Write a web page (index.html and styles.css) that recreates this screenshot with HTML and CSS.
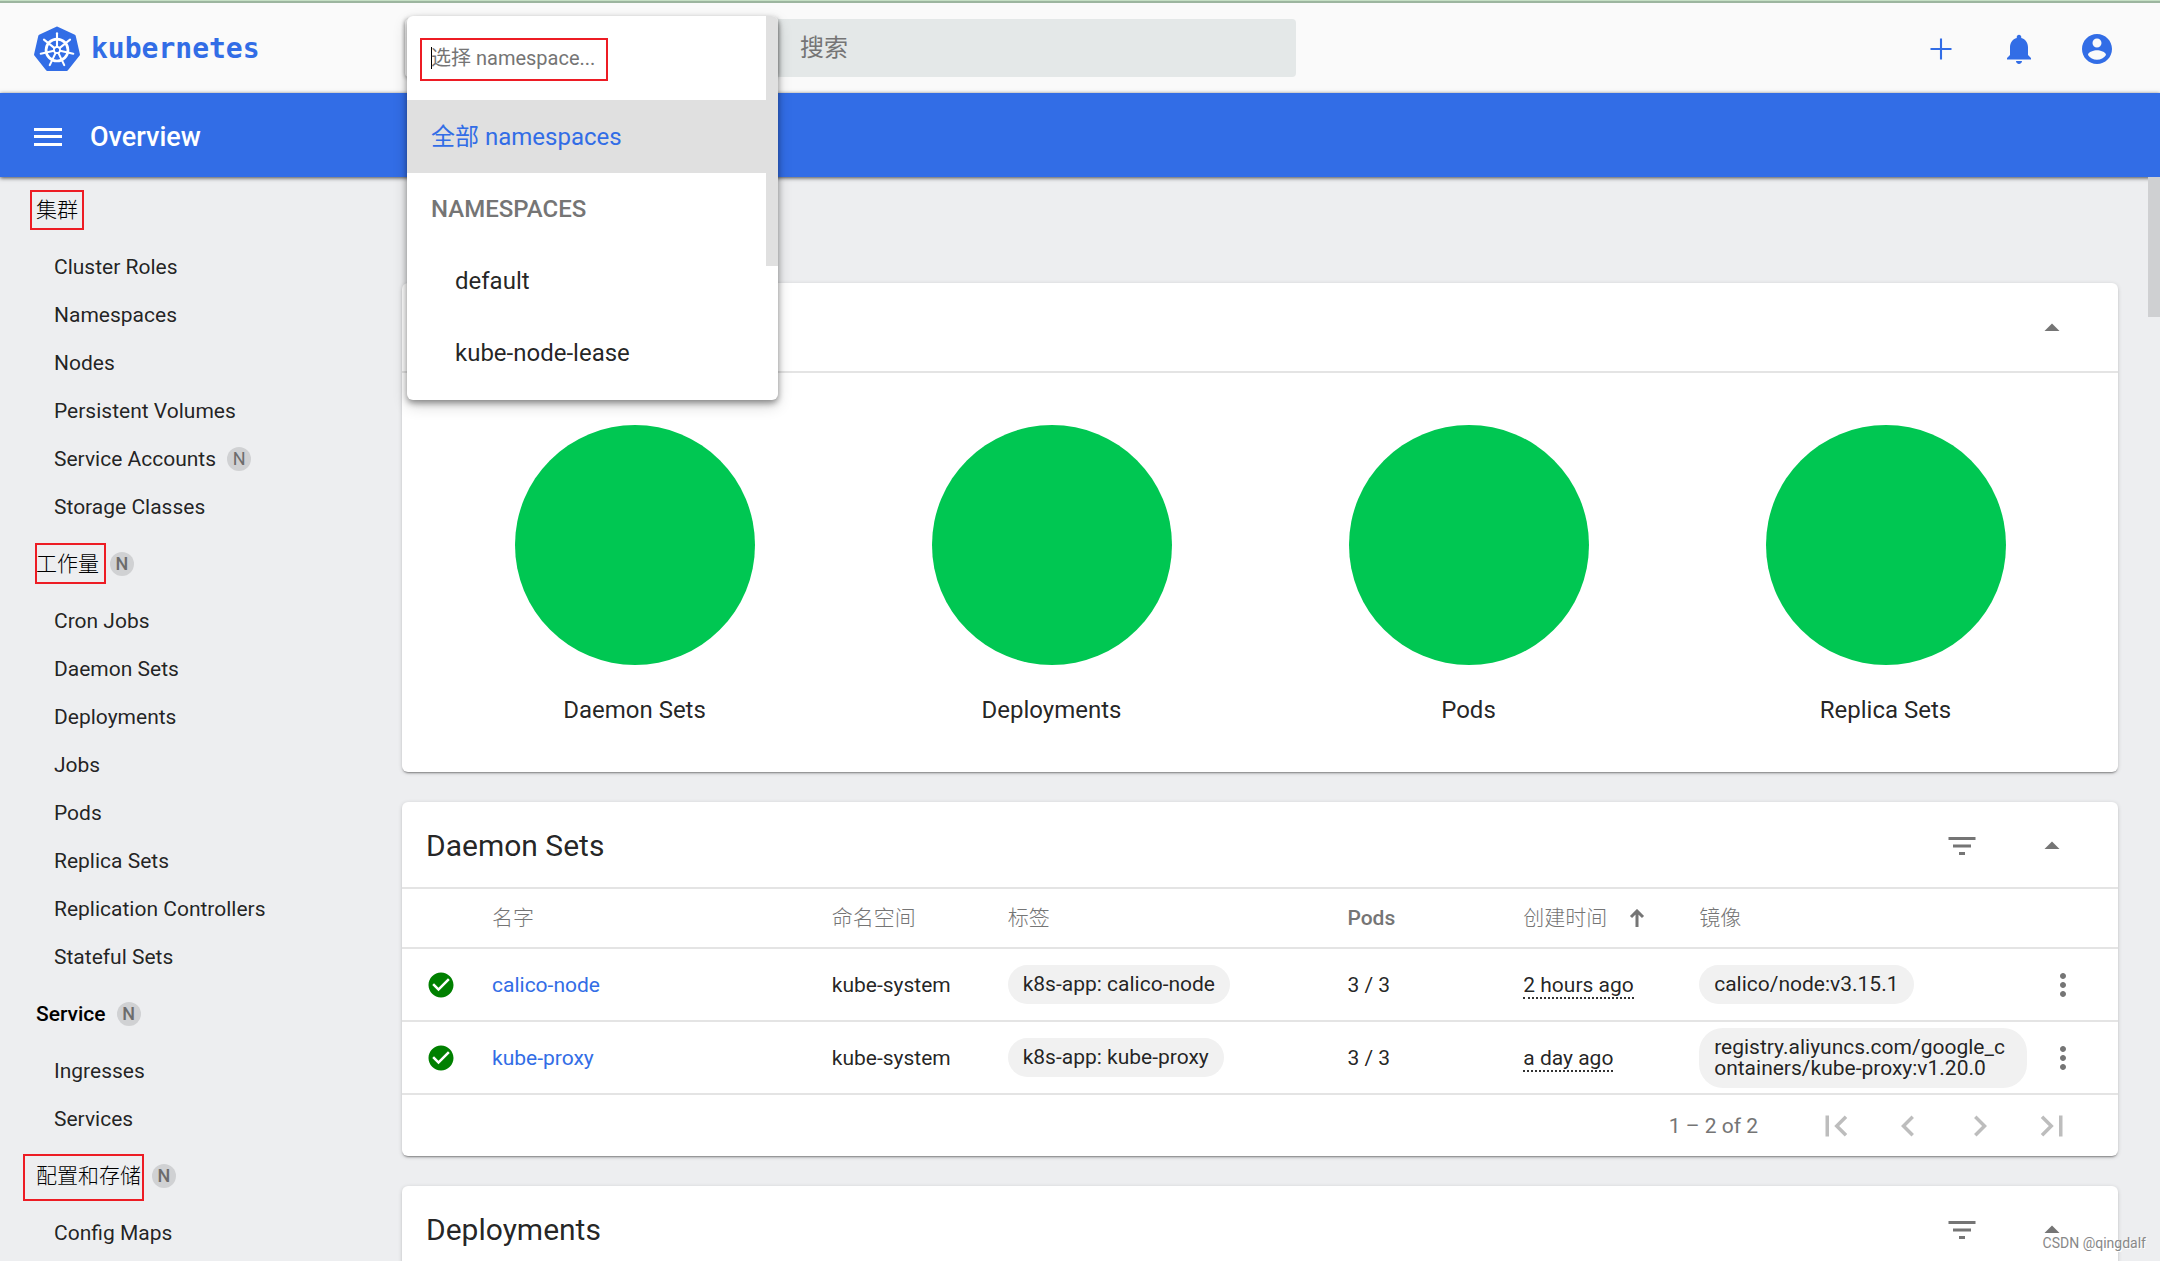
FILE: index.html
```html
<!DOCTYPE html>
<html lang="zh-CN">
<head>
<meta charset="utf-8">
<meta name="viewport" content="width=device-width, initial-scale=1">
<title>Overview - Kubernetes Dashboard</title>
<link rel="stylesheet" href="styles.css">
</head>
<body>
<svg class="defs" aria-hidden="true">
  <symbol id="i-up" viewBox="0 0 24 24"><path d="M7 14l5-5 5 5z"/></symbol>
  <symbol id="i-filter" viewBox="0 0 24 24"><path d="M10 18h4v-2h-4v2zM3 6v2h18V6H3zm3 7h12v-2H6v2z"/></symbol>
  <symbol id="i-more" viewBox="0 0 24 24"><path d="M12 8c1.1 0 2-.9 2-2s-.9-2-2-2-2 .9-2 2 .9 2 2 2zm0 2c-1.1 0-2 .9-2 2s.9 2 2 2 2-.9 2-2-.9-2-2-2zm0 6c-1.1 0-2 .9-2 2s.9 2 2 2 2-.9 2-2-.9-2-2-2z"/></symbol>
  <symbol id="i-check" viewBox="0 0 24 24"><path d="M12 2C6.480 2 2 6.480 2 12s4.480 10 10 10 10-4.480 10-10S17.520 2 12 2zm-2 15l-5-5 1.410-1.410L10 14.170l7.590-7.590L19 8l-9 9z"/></symbol>
</svg>

<header class="topbar">
  <a class="brand" href="#" aria-label="kubernetes">
    <svg class="brand-mark" viewBox="0 0 46 46" aria-hidden="true">
      <path d="M23 3L39.500 10.800 43.500 28.300 32.300 42.500H13.700L2.500 28.300 6.500 10.800Z" fill="#326de6" stroke="#326de6" stroke-width="3" stroke-linejoin="round"/>
      <g fill="none" stroke="#fff" transform="translate(23 24)">
        <circle r="10.500" stroke-width="2.600"/>
        <g stroke-width="2" stroke-linecap="round">
          <path d="M0-3V-16"/>
          <path d="M0-3V-16" transform="rotate(51.430)"/>
          <path d="M0-3V-16" transform="rotate(102.860)"/>
          <path d="M0-3V-16" transform="rotate(154.290)"/>
          <path d="M0-3V-16" transform="rotate(205.710)"/>
          <path d="M0-3V-16" transform="rotate(257.140)"/>
          <path d="M0-3V-16" transform="rotate(308.570)"/>
        </g>
        <circle r="3" stroke-width="1.600"/>
      </g>
    </svg>
    <span>kubernetes</span>
  </a>
  <div class="ns-select">
    <button class="ns-trigger" type="button" aria-label="namespace" aria-expanded="true"></button>
    <div class="ns-panel">
      <div class="ns-search"><input type="text" placeholder="选择 namespace..." aria-label="选择 namespace"></div>
      <button class="ns-option selected" type="button">全部 namespaces</button>
      <div class="ns-group">NAMESPACES</div>
      <button class="ns-option nested" type="button">default</button>
      <button class="ns-option nested" type="button">kube-node-lease</button>
    </div>
  </div>
  <input class="search" type="search" placeholder="搜索" aria-label="搜索">
  <div class="top-actions">
    <button type="button" aria-label="Create"><svg class="icon" viewBox="0 0 24 24"><path d="M19 12.700h-6.300V19h-1.400v-6.300H5v-1.400h6.300V5h1.400v6.300H19z"/></svg></button>
    <button type="button" aria-label="Notifications"><svg class="icon" viewBox="0 0 24 24"><path d="M12 22c1.100 0 2-.9 2-2h-4c0 1.100.9 2 2 2zm6-6v-5c0-3.070-1.630-5.640-4.500-6.320V4c0-.83-.67-1.500-1.500-1.500s-1.500.67-1.500 1.500v.68C7.640 5.360 6 7.920 6 11v5l-2 2v1h16v-1l-2-2z"/></svg></button>
    <button type="button" aria-label="User"><svg class="icon" viewBox="0 0 24 24"><path d="M12 2C6.480 2 2 6.480 2 12s4.480 10 10 10 10-4.480 10-10S17.520 2 12 2zm0 3c1.660 0 3 1.340 3 3s-1.340 3-3 3-3-1.340-3-3 1.340-3 3-3zm0 14.200c-2.500 0-4.710-1.280-6-3.220.03-1.990 4-3.080 6-3.080 1.990 0 5.970 1.090 6 3.080-1.290 1.940-3.500 3.220-6 3.220z"/></svg></button>
  </div>
</header>

<div class="titlebar">
  <button type="button" aria-label="Menu"><svg class="icon" viewBox="0 0 36 36"><path d="M4 9h28v3H4zM4 16h28v3H4zM4 24h28v3H4z"/></svg></button>
  <h1>Overview</h1>
</div>

<div class="body">
  <nav class="sidebar">
    <a class="group" href="#"><span class="mark mark-a">集群</span></a>
    <a href="#">Cluster Roles</a>
    <a href="#">Namespaces</a>
    <a href="#">Nodes</a>
    <a href="#">Persistent Volumes</a>
    <a href="#">Service Accounts<span class="badge">N</span></a>
    <a href="#">Storage Classes</a>
    <a class="group" href="#"><span class="mark mark-b">工作量</span><span class="badge">N</span></a>
    <a href="#">Cron Jobs</a>
    <a href="#">Daemon Sets</a>
    <a href="#">Deployments</a>
    <a href="#">Jobs</a>
    <a href="#">Pods</a>
    <a href="#">Replica Sets</a>
    <a href="#">Replication Controllers</a>
    <a href="#">Stateful Sets</a>
    <a class="group" href="#">Service<span class="badge">N</span></a>
    <a href="#">Ingresses</a>
    <a href="#">Services</a>
    <a class="group" href="#"><span class="mark mark-c">配置和存储</span><span class="badge">N</span></a>
    <a href="#">Config Maps</a>
  </nav>

  <main class="content">
    <section class="card status">
      <div class="card-head">
        <h2></h2>
        <button type="button" aria-label="Collapse"><svg class="icon"><use href="#i-up"/></svg></button>
      </div>
      <div class="charts">
        <figure><div class="pie"></div><figcaption>Daemon Sets</figcaption></figure>
        <figure><div class="pie"></div><figcaption>Deployments</figcaption></figure>
        <figure><div class="pie"></div><figcaption>Pods</figcaption></figure>
        <figure><div class="pie"></div><figcaption>Replica Sets</figcaption></figure>
      </div>
    </section>

    <section class="card">
      <div class="card-head">
        <h2>Daemon Sets</h2>
        <button type="button" aria-label="Filter"><svg class="icon"><use href="#i-filter"/></svg></button>
        <button type="button" aria-label="Collapse"><svg class="icon"><use href="#i-up"/></svg></button>
      </div>
      <table>
        <colgroup><col class="c-icon"><col class="c-wide"><col class="c-slim"><col class="c-wide"><col class="c-slim"><col class="c-slim"><col><col class="c-menu"></colgroup>
        <thead>
          <tr>
            <th></th><th>名字</th><th>命名空间</th><th>标签</th><th>Pods</th>
            <th><span class="sort">创建时间<svg viewBox="0 0 16 18" aria-hidden="true"><path d="M8 18V2M2 8l6-6 6 6" fill="none" stroke="currentColor" stroke-width="3"/></svg></span></th>
            <th>镜像</th><th></th>
          </tr>
        </thead>
        <tbody>
          <tr>
            <td><svg class="ok" aria-label="Running"><use href="#i-check"/></svg></td>
            <td><a href="#">calico-node</a></td>
            <td>kube-system</td>
            <td><span class="chip">k8s-app: calico-node</span></td>
            <td>3 / 3</td>
            <td><span class="ago">2 hours ago</span></td>
            <td><span class="chip">calico/node:v3.15.1</span></td>
            <td><button type="button" aria-label="Actions"><svg class="icon"><use href="#i-more"/></svg></button></td>
          </tr>
          <tr>
            <td><svg class="ok" aria-label="Running"><use href="#i-check"/></svg></td>
            <td><a href="#">kube-proxy</a></td>
            <td>kube-system</td>
            <td><span class="chip">k8s-app: kube-proxy</span></td>
            <td>3 / 3</td>
            <td><span class="ago">a day ago</span></td>
            <td><span class="chip">registry.aliyuncs.com/google_containers/kube-proxy:v1.20.0</span></td>
            <td><button type="button" aria-label="Actions"><svg class="icon"><use href="#i-more"/></svg></button></td>
          </tr>
        </tbody>
      </table>
      <div class="pager">
        <span>1 – 2 of 2</span>
        <div class="pager-buttons">
          <button type="button" disabled aria-label="First page"><svg viewBox="0 0 24 24"><path d="M18.410 16.590L13.820 12l4.590-4.590L17 6l-6 6 6 6zM6 6h2v12H6z"/></svg></button>
          <button type="button" disabled aria-label="Previous page"><svg viewBox="0 0 24 24"><path d="M15.410 7.410L14 6l-6 6 6 6 1.410-1.410L10.830 12z"/></svg></button>
          <button type="button" disabled aria-label="Next page"><svg viewBox="0 0 24 24"><path d="M10 6L8.590 7.410 13.170 12l-4.580 4.590L10 18l6-6z"/></svg></button>
          <button type="button" disabled aria-label="Last page"><svg viewBox="0 0 24 24"><path d="M5.590 7.410L10.180 12l-4.590 4.590L7 18l6-6-6-6zM16 6h2v12h-2z"/></svg></button>
        </div>
      </div>
    </section>

    <section class="card">
      <div class="card-head">
        <h2>Deployments</h2>
        <button type="button" aria-label="Filter"><svg class="icon"><use href="#i-filter"/></svg></button>
        <button type="button" aria-label="Collapse"><svg class="icon"><use href="#i-up"/></svg></button>
      </div>
    </section>
  </main>
  <div class="scroll-thumb"></div>
</div>
<div class="watermark">CSDN @qingdalf</div>
</body>
</html>
```
FILE: styles.css
```css
* { box-sizing: border-box; }

body {
  margin: 0;
  height: 100vh;
  overflow: hidden;
  position: relative;
  display: flex;
  flex-direction: column;
  background: #edeef0;
  color: rgba(0, 0, 0, .87);
  font: 21px/24px Roboto, "Noto Sans CJK SC", sans-serif;
}

.defs { display: none; }
h1, h2, figure { margin: 0; }
a { color: inherit; text-decoration: none; }
button {
  display: flex;
  align-items: center;
  justify-content: center;
  padding: 0;
  border: 0;
  background: none;
  color: inherit;
  font: inherit;
}
.icon { width: 36px; height: 36px; fill: currentColor; }

/* Top bar */
.topbar {
  flex: none;
  display: flex;
  align-items: center;
  height: 93px;
  padding: 3px 36px 0 33px;
  background: linear-gradient(#c5dfc4 0 1px, #9cb59f 1px 3px, #fafafa 3px);
}
.brand {
  display: flex;
  align-items: center;
  gap: 10px;
  width: 372px;
  padding-top: 2px;
  color: #326de6;
  font: bold 28px/36px "DejaVu Sans Mono", monospace;
}
.brand-mark { width: 48px; height: 48px; }
.ns-select { position: relative; width: 373px; }
.ns-trigger {
  width: 100%;
  height: 58px;
  border-radius: 4px;
  background: #fafafa;
  box-shadow: 0 1px 4px rgba(0, 0, 0, .4);
}
.ns-panel {
  position: absolute;
  z-index: 5;
  top: -3px;
  left: 2px;
  width: 371px;
  height: 384px;
  overflow: hidden;
  border-radius: 6px;
  background: #fff;
  box-shadow: 0 3px 6px rgba(0, 0, 0, .4), 0 6px 15px rgba(0, 0, 0, .16);
  font-size: 24px;
}
.ns-panel::after {
  content: "";
  position: absolute;
  top: 0;
  right: 0;
  width: 12px;
  height: 250px;
  background: #e0e0e0;
}
.ns-search { height: 84px; padding: 22px 13px; }
.ns-search input {
  display: block;
  width: 188px;
  height: 43px;
  padding: 0 9px 3px;
  border: 2px solid #ed1c24;
  outline: 0;
  background: linear-gradient(#000, #000) 9px 7px / 1px 22px no-repeat;
  font: 20px/24px Roboto, "Noto Sans CJK SC", sans-serif;
}
.ns-search input::placeholder, .search::placeholder { color: #757575; opacity: 1; }
.ns-option, .ns-group {
  display: flex;
  align-items: center;
  justify-content: flex-start;
  width: 100%;
  height: 72px;
  padding: 0 24px;
}
.ns-option.selected { height: 73px; background: #e0e0e0; color: #326de6; }
.ns-option.nested { padding-left: 48px; }
.ns-group { color: #757575; font-weight: 500; }
.search {
  width: 518px;
  height: 58px;
  padding: 0 22px;
  border: 0;
  border-radius: 0 4px 4px 0;
  background: #e4e8e8;
  font: 24px/30px Roboto, "Noto Sans CJK SC", sans-serif;
}
.top-actions { display: flex; margin-left: auto; padding-top: 2px; gap: 24px; color: #326de6; }
.top-actions button { width: 54px; height: 54px; }

/* Title bar */
.titlebar {
  flex: none;
  display: flex;
  align-items: center;
  gap: 24px;
  height: 84px;
  padding: 3px 30px 0;
  background: #326de6;
  color: #fff;
  box-shadow: 0 1px 4px rgba(0, 0, 0, .7);
  position: relative;
}
.titlebar h1 { font-size: 27px; line-height: 36px; font-weight: 500; }

.body {
  flex: 1;
  min-height: 0;
  position: relative;
  display: flex;
  overflow: hidden;
}

/* Navigation */
.sidebar { flex: none; width: 402px; }
.sidebar a {
  display: flex;
  align-items: center;
  height: 48px;
  padding-left: 54px;
}
.sidebar .group { height: 66px; padding-left: 36px; color: #000; font-weight: 500; }
.badge {
  width: 24px;
  height: 24px;
  margin-left: 11px;
  border-radius: 50%;
  background: #d0d1d3;
  color: #6c6c6c;
  font-size: 18px;
  text-align: center;
}
.mark { position: relative; font-weight: 300; }
.mark::after { content: ""; position: absolute; border: 2px solid #ed1c24; }
.mark-a::after { inset: -8px -6px; }
.mark-b::after { inset: -9px -7px -8px -1px; }
.mark-c::after { inset: -10px -3px -13px -13px; }

/* Cards */
.content {
  flex: 1;
  min-width: 0;
  display: flex;
  flex-direction: column;
  gap: 30px;
  padding: 106px 42px 0 0;
}
.card {
  flex: none;
  border-radius: 6px;
  background: #fff;
  box-shadow: 0 2px 2px -1px rgba(0, 0, 0, .4), 0 1px 4px rgba(0, 0, 0, .16);
}
.card-head {
  display: flex;
  align-items: center;
  gap: 36px;
  height: 85px;
  padding: 2px 39px 0 24px;
  color: #757575;
}
.card-head h2 {
  flex: 1;
  color: rgba(0, 0, 0, .87);
  font-size: 30px;
  line-height: 36px;
  font-weight: 400;
}
.card-head button { width: 54px; height: 54px; }
.status .card-head { height: 90px; border-bottom: 2px solid #e4e4e4; }
.charts {
  display: grid;
  grid-template-columns: repeat(4, 1fr);
  padding: 52px 24px 47px;
  font-size: 24px;
  line-height: 30px;
}
.charts figure { display: flex; flex-direction: column; align-items: center; gap: 30px; }
.pie { width: 240px; height: 240px; border-radius: 50%; background: #00c752; }

/* Table */
table { width: 100%; table-layout: fixed; border-collapse: collapse; }
.c-icon { width: 90px; }
.c-wide { width: 19.8%; }
.c-slim { width: 10.25%; }
.c-menu { width: 79px; }
th, td { padding: 0; text-align: left; vertical-align: middle; }
th:first-child, td:first-child { padding-left: 24px; }
tr { height: 73px; border-top: 2px solid #e4e4e4; }
tbody tr:last-child { border-bottom: 2px solid #e4e4e4; }
thead tr { height: 60px; }
th { color: #757575; font-weight: 500; }
th:not(:nth-child(5)) { font-weight: 300; }
td a { color: #326de6; }
td button { width: 48px; height: 54px; color: #757575; }
.sort { display: flex; align-items: center; gap: 22px; }
.sort svg { width: 16px; height: 18px; }
.ok { display: block; width: 30px; height: 30px; fill: #008000; }
.chip {
  display: inline-block;
  max-width: 328px;
  padding: 9px 15px;
  border-radius: 24px;
  background: #f1f1f1;
  line-height: 21px;
  word-break: break-all;
  vertical-align: middle;
}
.ago { border-bottom: 2px dotted #333; line-height: 21px; }

.pager {
  display: flex;
  align-items: center;
  justify-content: flex-end;
  gap: 48px;
  height: 61px;
  padding-right: 36px;
  color: #757575;
}
.pager-buttons { display: flex; gap: 12px; color: #bdbdbd; }
.pager-buttons button { width: 60px; height: 60px; }
.pager-buttons svg { width: 42px; height: 42px; fill: currentColor; }

.scroll-thumb {
  position: absolute;
  top: 0;
  right: 0;
  width: 12px;
  height: 140px;
  background: #cfd0d2;
}
.watermark {
  position: absolute;
  right: 14px;
  bottom: 6px;
  color: #888;
  font-size: 14px;
  text-shadow: 1px 1px #fff;
}
```
